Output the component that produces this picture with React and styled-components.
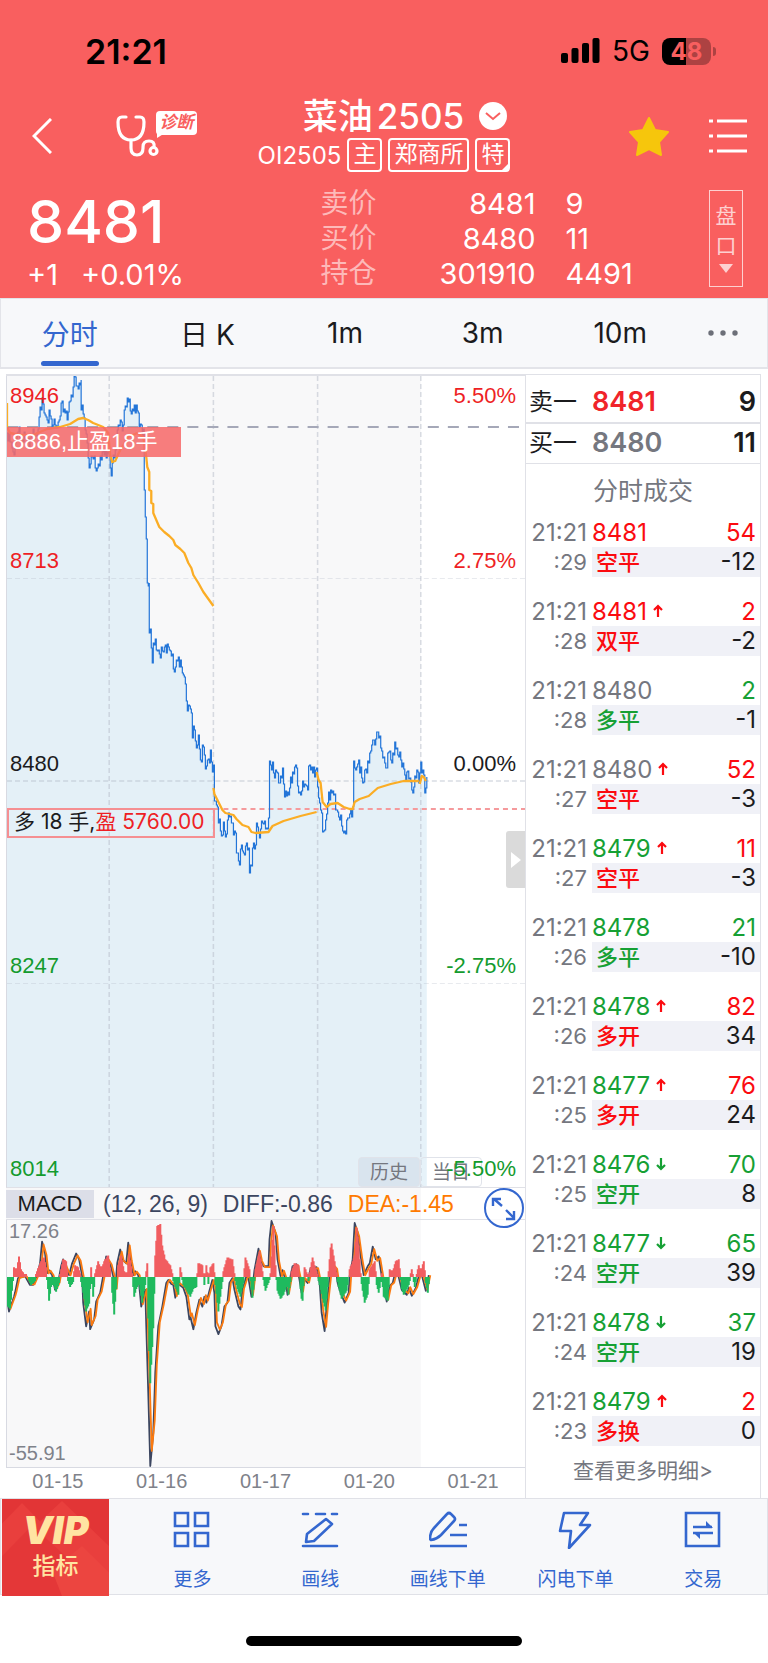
import React from "react";
import styled, { createGlobalStyle } from "styled-components";

const days = ["01-15", "01-16", "01-17", "01-20", "01-21"];

const levels = [
  { price: "8713", percent: "2.75%", color: "#ee1f25" },
  { price: "8480", percent: "0.00%", color: "#1b1b1d" },
  { price: "8247", percent: "-2.75%", color: "#149b2e" },
  { price: "8014", percent: "-5.50%", color: "#149b2e" },
];

const quotes = [
  { label: "卖价", price: "8481", count: "9" },
  { label: "买价", price: "8480", count: "11" },
  { label: "持仓", price: "301910", count: "4491" },
];

const red = "#fb0b10";
const green = "#16a034";
const gray = "#75777f";

const trades = [
  { sec: ":29", price: "8481", tone: red, type: "空平", side: red, vol: "54", diff: "-12" },
  { sec: ":28", price: "8481", tone: red, move: "up", type: "双平", side: red, vol: "2", diff: "-2" },
  { sec: ":28", price: "8480", tone: gray, type: "多平", side: green, vol: "2", diff: "-1" },
  { sec: ":27", price: "8480", tone: gray, move: "up", type: "空平", side: red, vol: "52", diff: "-3" },
  { sec: ":27", price: "8479", tone: green, move: "up", type: "空平", side: red, vol: "11", diff: "-3" },
  { sec: ":26", price: "8478", tone: green, type: "多平", side: green, vol: "21", diff: "-10" },
  { sec: ":26", price: "8478", tone: green, move: "up", type: "多开", side: red, vol: "82", diff: "34" },
  { sec: ":25", price: "8477", tone: green, move: "up", type: "多开", side: red, vol: "76", diff: "24" },
  { sec: ":25", price: "8476", tone: green, move: "down", type: "空开", side: green, vol: "70", diff: "8" },
  { sec: ":24", price: "8477", tone: green, move: "down", type: "空开", side: green, vol: "65", diff: "39" },
  { sec: ":24", price: "8478", tone: green, move: "down", type: "空开", side: green, vol: "37", diff: "19" },
  { sec: ":23", price: "8479", tone: green, move: "up", type: "多换", side: red, vol: "2", diff: "0" },
];

// chart series as flat x,y pairs in viewBox units
const priceData = [
  0,57, 6,76, 10,57, 20,64, 30,57, 32,41, 34,34, 35,22, 37,37, 40,44, 42,34, 45,51, 48,49, 52,44,
  54,27, 56,36, 61,36, 62,26, 66,20, 66,11, 68,1, 70,10, 74,4, 74,34, 76,38, 79,58, 82,84, 82,92,
  85,81, 90,92, 94,84, 96,74, 101,77, 104,100, 105,87, 108,74, 111,49, 116,49, 117,34, 120,22,
  124,38, 127,29, 131,37, 132,51, 137,54, 137,114, 138,141, 139,163, 140,207, 142,207, 142,257,
  143,253, 144,272, 145,287, 146,267, 150,275, 156,276, 160,268, 163,275, 167,296, 169,284,
  171,281, 175,297, 178,308, 179,325, 182,330, 185,340, 185,362, 187,354, 189,372, 191,359,
  193,384, 196,371, 198,393, 201,383, 203,374, 205,396, 206,389, 207,425, 210,431, 211,447,
  215,459, 216,446, 218,461, 220,444, 222,441, 228,457, 229,477, 232,489, 234,469, 236,477,
  239,467, 241,472, 242,497, 244,490, 245,472, 248,469, 249,447, 251,457, 255,447, 259,452,
  261,442, 262,385, 264,394, 265,386, 267,402, 269,396, 271,407, 275,392, 277,421, 281,419,
  283,401, 289,392, 291,417, 298,409, 301,406, 301,390, 305,397, 309,392, 310,411, 313,434,
  315,456, 317,454, 320,427, 321,416, 326,419, 330,436, 336,457, 341,442, 345,431, 346,385,
  348,394, 351,384, 352,397, 356,406, 357,394, 361,387, 364,369, 366,364, 370,356, 373,372,
  376,381, 378,392, 381,376, 384,387, 387,366, 390,379, 395,387, 397,399, 402,402, 404,414,
  410,396, 411,407, 413,386, 416,399, 417,417, 419,401,
];

const averageData = [
  [0,27, 0,51, 3,57, 13,59, 26,59, 40,53, 53,51, 63,48, 71,43, 76,42, 81,44, 86,47, 96,51, 101,57,
    103,79, 105,86, 108,85, 113,74, 121,61, 130,57, 136,61, 139,81, 140,91, 142,96, 142,114,
    144,115, 144,127, 146,128, 146,137, 149,144, 152,151, 157,156, 162,160, 166,164, 168,169,
    173,173, 177,177, 181,187, 184,192, 186,199, 191,207, 196,216, 201,223, 206,230],
  [206,412, 207,418, 210,424, 215,434, 218,437, 226,439, 229,443, 235,449, 241,451, 244,456,
    248,457, 261,456, 265,450, 276,445, 293,440, 309,436],
  [309,396, 311,404, 313,407, 315,426, 319,431, 323,428, 330,427, 336,431, 342,433, 345,433,
    347,426, 352,423, 361,420, 370,412, 383,408, 396,405, 411,405],
  [412,408, 414,400, 416,401, 418,405],
];

const diffData = [
  0,79, 2,93, 7,78, 8,74, 11,59, 18,57, 23,66, 26,66, 30,56, 33,44, 35,22, 38,34, 40,54, 42,51,
  45,56, 48,71, 51,64, 54,47, 56,40, 59,49, 62,56, 65,44, 69,34, 72,40, 75,57, 76,84, 79,108,
  82,93, 83,111, 87,101, 89,83, 93,74, 97,51, 99,37, 103,44, 106,57, 108,71, 110,44, 113,30,
  115,40, 119,44, 121,23, 123,40, 126,56, 128,52, 131,56, 134,88, 138,71, 139,108, 141,176,
  143,250, 146,216, 148,155, 151,108, 155,88, 159,64, 161,61, 164,65, 166,66, 168,79, 170,64,
  176,69, 179,78, 182,101, 183,98, 186,111, 189,94, 192,81, 195,88, 197,78, 199,84, 202,72,
  205,61, 207,74, 208,108, 211,116, 214,108, 217,88, 220,84, 222,64, 225,59, 227,71, 231,88,
  233,91, 235,71, 239,57, 241,59, 244,78, 247,51, 251,29, 253,40, 256,47, 261,47, 262,20,
  264,1, 268,13, 270,40, 273,57, 275,51, 278,61, 280,76, 283,57, 285,47, 289,45, 292,61,
  294,74, 296,59, 300,64, 303,49, 309,48, 312,64, 314,94, 317,113, 319,88, 322,57, 324,44,
  328,49, 330,64, 333,74, 337,84, 341,74, 342,57, 345,40, 347,3, 350,13, 353,37, 356,56,
  360,47, 362,44, 365,27, 368,40, 371,37, 374,57, 379,83, 382,67, 385,64, 388,51, 390,54,
  394,71, 399,76, 401,69, 404,77, 408,69, 411,57, 414,56, 418,72, 421,56,
];

const histData = [
  0,-28, 2,-30, 4,-12, 6,8, 9,6, 11,19, 13,6, 16,1, 20,0, 23,-6, 27,-2, 29,4, 33,14, 36,18,
  38,8, 40,-10, 41,-22, 43,-8, 45,-4, 48,-13, 51,-4, 53,6, 55,16, 58,14, 60,-2, 62,-8, 65,-3,
  67,10, 70,8, 72,2, 74,-8, 78,-33, 81,-25, 82,-10, 83,8, 85,-18, 87,2, 90,14, 93,6, 96,14,
  100,20, 103,0, 104,-14, 106,-36, 108,-10, 110,10, 113,20, 116,4, 119,2, 121,22, 124,2,
  126,-18, 128,-10, 131,-4, 134,-24, 137,-6, 138,4, 139,12, 140,-40, 142,-106, 145,-50, 147,20,
  149,50, 152,52, 154,30, 157,16, 162,10, 165,-2, 170,-16, 172,8, 175,-6, 182,-18, 185,-10,
  188,-8, 190,12, 194,10, 196,-6, 198,10, 200,-5, 202,8, 205,12, 207,-6, 210,-33, 213,-10,
  215,4, 219,18, 224,16, 226,2, 229,-10, 232,-18, 235,-4, 237,18, 241,6, 244,-19, 247,6,
  251,24, 254,4, 257,-12, 262,2, 264,36, 265,50, 267,10, 269,-12, 272,-20, 275,-16, 278,-8,
  279,-4, 280,-16, 283,4, 286,12, 290,10, 293,-20, 294,-22, 296,8, 300,-2, 304,18, 306,10,
  310,-2, 314,-20, 317,-32, 320,4, 322,28, 323,32, 327,8, 330,-8, 333,-20, 338,-12, 341,6,
  344,14, 346,20, 348,48, 350,30, 352,2, 354,-12, 356,-24, 359,-16, 361,6, 366,14, 368,-6,
  370,-14, 373,2, 375,-18, 379,-22, 381,6, 384,4, 387,14, 390,16, 393,-10, 395,-16, 400,-6,
  403,6, 406,-8, 410,10, 412,4, 415,14, 417,-4, 419,-14, 421,4,
];

const ZERO = 58;

const pairs = (flat) => {
  const out = [];
  for (let i = 0; i < flat.length; i += 2) out.push([flat[i], flat[i + 1]]);
  return out;
};

const linePath = (points) => "M" + points.map((p) => p.join(" ")).join("L");

// minute ticks between the known turning points, drawn as small steps
const tickPath = (points) => {
  let d = `M${points[0][0]} ${points[0][1]}`;
  let n = 0;
  for (let i = 1; i < points.length; i++) {
    const [x0, y0] = points[i - 1];
    const [x1, y1] = points[i];
    for (let x = x0 + 1; x < x1; x++) {
      n++;
      const y = y0 + ((y1 - y0) * (x - x0)) / (x1 - x0);
      const swing = Math.round(Math.sin(n * 2.4) * 4 + Math.cos(n * 5.3) * 4);
      d += `H${x}V${Math.round(y + swing)}`;
    }
    d += `H${x1}V${y1}`;
  }
  return d;
};

// histogram bars, slightly wider than their step so neighbours join up
const barPath = (points, sign) => {
  let d = "";
  for (let i = 1; i < points.length; i++) {
    const [x0, v0] = points[i - 1];
    const [x1, v1] = points[i];
    for (let x = x0; x < x1; x++) {
      const v = Math.round(v0 + ((v1 - v0) * (x - x0)) / (x1 - x0));
      if (v * sign > 0) d += `M${x} ${ZERO}V${ZERO - v - sign * 2}H${x + 2}V${ZERO}Z`;
    }
  }
  return d;
};

const pricePath = tickPath(pairs(priceData));
const diffPoints = pairs(diffData);
const deaPoints = diffPoints.map(([x, y]) => [x + 1.5, ZERO + (y - ZERO) * 0.92]);
const histPoints = pairs(histData);

const Arrow = ({ move }) => (
  <ArrowIcon viewBox="0 0 10 14" aria-hidden="true" $move={move}>
    <path
      d={move === "down" ? "M5 1V12M1 8l4 4 4-4" : "M5 13V2M1 6l4-4 4 4"}
      fill="none"
      stroke="currentColor"
      strokeWidth="2.2"
    />
  </ArrowIcon>
);

const PriceChart = () => (
  <PriceSvg viewBox="0 0 517 811" preserveAspectRatio="none">
    <rect width="413" height="811" fill="#f8f8f9" />
    <path d={`${pricePath}V811H0Z`} fill="#d9ebf6" fillOpacity="0.65" />
    <g stroke="#b4bac8" strokeOpacity="0.5" strokeWidth="1.5" strokeDasharray="5 3">
      <path d="M102 0V811M206 0V811M310 0V811M413 0V811" />
      <path d="M0 405H517" />
      <path d="M0 202.5H517M0 607.5H517" strokeOpacity="0.3" strokeWidth="1" />
    </g>
    <path d="M0 51H517" stroke="#a5a8b8" strokeWidth="2" strokeDasharray="11 9" />
    <path d="M0 433H517" stroke="#f59a9c" strokeWidth="1.8" strokeDasharray="5 4" />
    <path d={pricePath} fill="none" stroke="#2375d8" strokeWidth="1.2" />
    {averageData.map((part) => (
      <path
        key={part[0]}
        d={linePath(pairs(part))}
        fill="none"
        stroke="#fbad25"
        strokeWidth="2.3"
        strokeLinejoin="round"
      />
    ))}
  </PriceSvg>
);

const MacdChart = () => (
  <MacdSvg viewBox="0 0 517 251" preserveAspectRatio="none">
    <rect width="413" height="251" fill="#f8f8f9" />
    <g fill="none" strokeWidth="1.8" strokeLinejoin="round">
      <path d={linePath(diffPoints)} stroke="#3c4660" />
      <path d={linePath(deaPoints)} stroke="#fb7a10" />
    </g>
    <path d={barPath(histPoints, 1)} fill="#f15d60" />
    <path d={barPath(histPoints, -1)} fill="#1fba5e" />
  </MacdSvg>
);

const MoreIcon = () => (
  <NavIcon viewBox="0 0 38 38">
    <path d="M2 2h13v13H2zM22 2h13v13H22zM2 22h13v13H2zM22 22h13v13H22z" />
  </NavIcon>
);

const DrawIcon = () => (
  <NavIcon viewBox="0 0 38 38">
    <path d="M2 3h5M15 3h9M31 3h5M2 35h34" strokeLinecap="round" />
    <path d="M5 31l1-8L25 8l6 5L13 30z" strokeLinejoin="round" />
  </NavIcon>
);

const DrawOrderIcon = () => (
  <NavIcon viewBox="0 0 38 38">
    <path d="M1 28q0-7 4-11L18 3q2-2 4 0l3 3q2 2 0 4L12 24q-4 4-10 5z" strokeLinejoin="round" />
    <path d="M30 14h8M21 24h17M1 35h37" />
  </NavIcon>
);

const FlashIcon = () => (
  <NavIcon viewBox="0 0 38 38">
    <path d="M8 2H32L24 14h10L13 37l2-17H4z" strokeLinejoin="round" />
  </NavIcon>
);

const TradeIcon = () => (
  <NavIcon viewBox="0 0 38 38">
    <path d="M2 2h33v33H2zM9 16h19M9 22h20" />
    <path d="M22 10l7 7h-7zM9 21h7v7z" fill="currentColor" stroke="none" />
  </NavIcon>
);

const navItems = [
  { label: "更多", icon: MoreIcon },
  { label: "画线", icon: DrawIcon },
  { label: "画线下单", icon: DrawOrderIcon },
  { label: "闪电下单", icon: FlashIcon },
  { label: "交易", icon: TradeIcon },
];

const App = () => {
  return (
    <Page>
      <GlobalStyle />
      <Header>
        <StatusBar>
          <Clock>21:21</Clock>
          <StatusRight>
            <svg width="39" height="26" viewBox="0 0 39 26">
              <rect y="15" width="7" height="10" rx="2" />
              <rect x="10.5" y="10" width="7" height="15" rx="2" />
              <rect x="21" y="5" width="7" height="20" rx="2" />
              <rect x="31.5" width="7" height="25" rx="2" />
            </svg>
            <Network>5G</Network>
            <Battery>
              <b>4</b>
              <b>8</b>
            </Battery>
          </StatusRight>
        </StatusBar>
        <TitleBar>
          <Tools>
            <IconButton aria-label="返回">
              <svg width="20" height="36" viewBox="0 0 20 36">
                <path d="M19 1L2 18l17 17" fill="none" stroke="#fff" strokeWidth="3" />
              </svg>
            </IconButton>
            <DiagnoseButton>
              <svg width="43" height="42" viewBox="0 0 43 42">
                <g fill="none" stroke="#fff" strokeWidth="3.2" strokeLinecap="round">
                  <path d="M10 2H6Q2 2 2 7q0 18 13 18T28 7q0-5-4-5h-4" />
                  <path d="M15 25v8q0 7 6 7t6-7v-1q0-6 6-6t5 6" />
                  <circle cx="37.5" cy="36" r="3.5" />
                </g>
              </svg>
              <Bubble>诊断</Bubble>
            </DiagnoseButton>
          </Tools>
          <TitleBlock>
            <Title>
              <TitleName>
                <span>菜油</span>
                <span>2505</span>
              </TitleName>
              <IconButton aria-label="切换合约">
                <svg width="28" height="28" viewBox="0 0 28 28">
                  <circle cx="14" cy="14" r="14" fill="#fff" />
                  <path d="M7 11l7 6 7-6" fill="none" stroke="#f95f5f" strokeWidth="2" />
                </svg>
              </IconButton>
            </Title>
            <Subtitle>
              <span>OI2505</span>
              <Tag>主</Tag>
              <Tag>郑商所</Tag>
              <Tag $corner>特</Tag>
            </Subtitle>
          </TitleBlock>
          <Tools $end>
            <IconButton aria-label="自选">
              <svg width="42" height="40" viewBox="0 0 42 40">
                <path
                  d="M21 2l6 12 13 2-9 10 2 13-12-6-12 6 2-13L2 16l13-2z"
                  fill="#f6c60c"
                  stroke="#f6c60c"
                  strokeWidth="2"
                  strokeLinejoin="round"
                />
              </svg>
            </IconButton>
            <IconButton aria-label="菜单">
              <svg width="38" height="34" viewBox="0 0 38 34">
                <path
                  d="M0 2h4M8 2h30M0 17h4M8 17h30M0 32h4M8 32h30"
                  stroke="#fff"
                  strokeWidth="3"
                />
              </svg>
            </IconButton>
          </Tools>
        </TitleBar>
        <Quote>
          <Last>
            <LastPrice>8481</LastPrice>
            <Change>
              <span>+1</span>
              <span>+0.01%</span>
            </Change>
          </Last>
          <QuoteTable>
            <tbody>
              {quotes.map((q) => (
                <tr key={q.label}>
                  <th scope="row">{q.label}</th>
                  <td>{q.price}</td>
                  <td>{q.count}</td>
                </tr>
              ))}
            </tbody>
          </QuoteTable>
          <DepthButton>
            <span>盘</span>
            <span>口</span>
            <svg width="14" height="9" viewBox="0 0 14 9">
              <path d="M0 0h14L7 9z" fill="#fdd0d0" />
            </svg>
          </DepthButton>
        </Quote>
      </Header>

      <Tabs>
        <Tab $active>分时</Tab>
        <Tab>日 K</Tab>
        <Tab>1m</Tab>
        <Tab>3m</Tab>
        <Tab>10m</Tab>
        <MoreTab aria-label="更多周期">
          <svg width="30" height="6" viewBox="0 0 30 6" fill="#6c6f78">
            <circle cx="3" cy="3" r="2.7" />
            <circle cx="15" cy="3" r="2.7" />
            <circle cx="27" cy="3" r="2.7" />
          </svg>
        </MoreTab>
      </Tabs>

      <Main>
        <Charts>
          <PricePanel>
            <PriceChart />
            <RangeSwitch>
              <RangeButton $active>历史</RangeButton>
              <RangeButton>当日</RangeButton>
            </RangeSwitch>
            <Scale>
              {levels.map((level, i) => (
                <ScaleRow key={level.price}>
                  {i === 0 && (
                    <Level $color="#ee1f25">
                      <span>8946</span>
                      <span>5.50%</span>
                    </Level>
                  )}
                  <Level $color={level.color} $bottom>
                    <span>{level.price}</span>
                    <span>{level.percent}</span>
                  </Level>
                </ScaleRow>
              ))}
            </Scale>
            <StopTag>8886,止盈18手</StopTag>
            <PositionTag>
              多 18 手,<em>盈 5760.00</em>
            </PositionTag>
            <Handle aria-label="收起明细">
              <svg width="10" height="16" viewBox="0 0 10 16">
                <path d="M0 0l10 8-10 8z" fill="#fff" />
              </svg>
            </Handle>
          </PricePanel>
          <MacdHead>
            <MacdButton>MACD</MacdButton>
            <MacdText>(12, 26, 9)</MacdText>
            <MacdText>DIFF:-0.86</MacdText>
            <MacdText $color="#ff7a00">DEA:-1.45</MacdText>
            <Expand aria-label="全屏">
              <svg width="40" height="40" viewBox="0 0 40 40">
                <circle cx="20" cy="20" r="19" fill="#fff" fillOpacity="0.8" />
                <g fill="none" stroke="#3467cf" strokeWidth="2">
                  <circle cx="20" cy="20" r="19" />
                  <path d="M18 18l-8-7M9 18v-7h8M22 22l8 8M22 31h8v-8" strokeWidth="2.4" />
                </g>
              </svg>
            </Expand>
          </MacdHead>
          <MacdPanel>
            <MacdChart />
            <MacdRange>
              <span>17.26</span>
              <span>-55.91</span>
            </MacdRange>
          </MacdPanel>
          <Dates>
            {days.map((day) => (
              <span key={day}>{day}</span>
            ))}
          </Dates>
        </Charts>

        <Side>
          <BestTable>
            <tbody>
              <tr>
                <th scope="row">卖一</th>
                <BestPrice $color="#f0242a">8481</BestPrice>
                <td>9</td>
              </tr>
              <tr>
                <th scope="row">买一</th>
                <BestPrice $color={gray}>8480</BestPrice>
                <td>11</td>
              </tr>
            </tbody>
          </BestTable>
          <SideTitle>分时成交</SideTitle>
          <TradeTable>
            <tbody>
              {trades.map((t, i) => (
                <tr key={i}>
                  <TimeCell>
                    <Line>21:21</Line>
                    <Line $size="22px">{t.sec}</Line>
                  </TimeCell>
                  <td>
                    <Line $color={t.tone}>
                      {t.price}
                      {t.move && <Arrow move={t.move} />}
                    </Line>
                    <TypeLine $color={t.side} $size="22px" $filled>
                      {t.type}
                    </TypeLine>
                  </td>
                  <VolumeCell>
                    <Line $color={t.side}>{t.vol}</Line>
                    <Line $filled>{t.diff}</Line>
                  </VolumeCell>
                </tr>
              ))}
            </tbody>
          </TradeTable>
          <MoreLink href="#trades">查看更多明细&gt;</MoreLink>
        </Side>
      </Main>

      <BottomNav>
        <VipButton>
          <VipArt viewBox="0 0 107 95" preserveAspectRatio="none">
            <path d="M0 24L20 4l18 18L60 2l47 44v49H0z" fill="#e93f3d" />
            <path d="M0 56L30 26l77 69H0z" fill="#e43738" />
            <path d="M50 70L80 46l27 26v23H60z" fill="#ec4540" />
          </VipArt>
          <VipName>VIP</VipName>
          <VipLabel>指标</VipLabel>
        </VipButton>
        {navItems.map(({ label, icon: ItemIcon }) => (
          <NavButton key={label}>
            <ItemIcon />
            {label}
          </NavButton>
        ))}
      </BottomNav>
      <HomeArea>
        <HomeBar />
      </HomeArea>
    </Page>
  );
};

export default App;

const GlobalStyle = createGlobalStyle`
  * {
    box-sizing: border-box;
  }
  body {
    margin: 0;
    background: #fff;
    font-family: Inter, "Noto Sans CJK SC", sans-serif;
    color: #1b1b1d;
  }
  button {
    margin: 0;
    padding: 0;
    border: 0;
    background: transparent;
    font: inherit;
    color: inherit;
    cursor: pointer;
  }
  svg {
    display: block;
  }
  table {
    border-collapse: collapse;
  }
  th,
  td {
    padding: 0;
    font-weight: 400;
    text-align: left;
  }
`;

const Page = styled.div`
  display: flex;
  flex-direction: column;
`;
const Header = styled.header`
  height: 298px;
  background: #f95f5f;
  color: #fff;
`;
const StatusBar = styled.div`
  display: flex;
  justify-content: space-between;
  align-items: center;
  height: 98px;
  padding: 4px 57px 0 85px;
  color: #000;
`;
const Clock = styled.div`
  font-size: 34px;
  font-weight: 600;
`;
const StatusRight = styled.div`
  display: flex;
  align-items: center;
`;
const Network = styled.span`
  margin: 0 12px;
  font-size: 28px;
`;
const Battery = styled.div`
  position: relative;
  display: flex;
  align-items: center;
  justify-content: center;
  width: 49px;
  height: 27px;
  border-radius: 8px;
  background: linear-gradient(90deg, #000 49%, #ad4242 49%);
  color: #f95f5f;
  font-size: 24px;
  line-height: 27px;

  &::after {
    content: "";
    position: absolute;
    right: -5px;
    top: 9px;
    width: 3px;
    height: 9px;
    border-radius: 0 4px 4px 0;
    background: #ad4242;
  }
`;
const TitleBar = styled.div`
  display: grid;
  grid-template-columns: 1fr auto 1fr;
  height: 84px;
`;
const Tools = styled.div`
  display: flex;
  align-items: center;
  justify-content: ${({ $end }) => ($end ? "flex-end" : "flex-start")};
  gap: ${({ $end }) => ($end ? "39px" : "64px")};
  padding: 0 21px 8px 32px;
`;
const IconButton = styled.button`
  flex: none;
`;
const DiagnoseButton = styled.button`
  position: relative;
`;
const Bubble = styled.span`
  position: absolute;
  left: 40px;
  top: -4px;
  width: 41px;
  height: 24px;
  border-radius: 4px;
  background: #fff;
  color: #f95f5f;
  font-size: 17px;
  font-weight: 700;
  font-style: italic;
  line-height: 23px;

  &::after {
    content: "";
    position: absolute;
    left: 1px;
    bottom: -3px;
    border-top: 5px solid #fff;
    border-right: 8px solid transparent;
  }
`;
const TitleBlock = styled.div`
  display: flex;
  flex-direction: column;
  align-items: center;
`;
const Title = styled.h1`
  display: flex;
  align-items: center;
  gap: 15px;
  margin: 0 0 0 42px;
  font-size: 35px;
  font-weight: 500;
  line-height: 36px;
`;
const TitleName = styled.span`
  display: flex;
  gap: 4px;
`;
const Subtitle = styled.div`
  display: flex;
  align-items: center;
  gap: 6px;
  margin-top: 4px;
  font-size: 24px;
`;
const Tag = styled.span`
  position: relative;
  height: 34px;
  padding: 0 4px;
  border: 2px solid #fff;
  border-radius: 4px;
  font-size: 23px;
  line-height: 29px;

  &::after {
    content: "";
    display: ${({ $corner }) => ($corner ? "block" : "none")};
    position: absolute;
    right: 0;
    bottom: 0;
    border-left: 6px solid transparent;
    border-bottom: 6px solid #fff;
  }
`;
const Quote = styled.div`
  display: flex;
  align-items: flex-start;
  padding: 4px 25px 0 27px;
`;
const Last = styled.div`
  flex: 0 0 41%;
`;
const LastPrice = styled.div`
  font-size: 59px;
  font-weight: 500;
  line-height: 71px;
`;
const Change = styled.div`
  display: flex;
  gap: 23px;
  font-size: 29px;
  line-height: 35px;
`;
const QuoteTable = styled.table`
  font-size: 29px;
  line-height: 35px;

  tr {
    height: 35px;
  }
  th {
    width: 64px;
    color: #fdb9b9;
    font-size: 28px;
  }
  td:nth-child(2) {
    width: 151px;
    text-align: right;
  }
  td:last-child {
    padding-left: 30px;
  }
`;
const DepthButton = styled.button`
  display: flex;
  flex-direction: column;
  align-items: center;
  width: 34px;
  height: 97px;
  margin: 4px 0 0 auto;
  padding-top: 10px;
  border: 1px solid #fdd0d0;
  color: #fdd0d0;
  font-size: 21px;
  line-height: 30px;

  svg {
    margin-top: 3px;
  }
`;
const Tabs = styled.nav`
  display: grid;
  grid-template-columns: repeat(5, 1fr) 78px;
  height: 71px;
  border: 1px solid #e3e4e9;
  border-bottom-width: 2px;
  background: #f7f8fa;
`;
const Tab = styled.button`
  position: relative;
  display: flex;
  align-items: center;
  justify-content: center;
  font-size: 28px;
  color: ${({ $active }) => ($active ? "#3467cf" : "#1b1b1d")};

  &::after {
    content: "";
    display: ${({ $active }) => ($active ? "block" : "none")};
    position: absolute;
    bottom: 1px;
    width: 58px;
    height: 5px;
    border-radius: 3px;
    background: #3467cf;
  }
`;
const MoreTab = styled(Tab)`
  padding-right: 10px;
`;
const Main = styled.main`
  display: flex;
  padding: 5px 7px 0 6px;
`;
const Charts = styled.section`
  display: flex;
  flex-direction: column;
  flex: 1;
  min-width: 0;
  border-top: 2px solid #e0e1e7;
  font-family: "Liberation Sans", "Noto Sans CJK SC", sans-serif;
`;
const PricePanel = styled.div`
  position: relative;
  border-left: 1px solid #d8dae2;
  border-bottom: 1px solid #e0e1e7;
`;
const PriceSvg = styled.svg`
  width: 100%;
  height: 811px;
`;
const StopTag = styled.div`
  position: absolute;
  left: 0;
  top: 51px;
  width: 174px;
  height: 30px;
  padding-left: 5px;
  background: rgba(247, 105, 105, 0.86);
  color: #fff;
  font-size: 22px;
  line-height: 30px;
`;
const PositionTag = styled.div`
  position: absolute;
  left: 0;
  top: 432px;
  width: 208px;
  height: 30px;
  padding-left: 5px;
  border: 2px solid #f58f92;
  font-family: Inter, "Noto Sans CJK SC", sans-serif;
  font-size: 21px;
  line-height: 24px;
  white-space: nowrap;

  em {
    color: #ee1f25;
    font-style: normal;
  }
`;
const RangeSwitch = styled.div`
  position: absolute;
  right: 43px;
  bottom: 0;
  display: flex;
`;
const RangeButton = styled.button`
  width: 62px;
  height: 30px;
  border: 1px solid #e0e3ea;
  border-radius: 4px;
  background: ${({ $active }) => ($active ? "#d9e4ee" : "transparent")};
  color: ${gray};
  font-size: 19px;
  line-height: 30px;
`;
const Scale = styled.div`
  position: absolute;
  inset: 0;
  display: grid;
  grid-template-rows: repeat(4, 1fr);
  padding: 0 9px 0 3px;
  pointer-events: none;
`;
const ScaleRow = styled.div`
  display: flex;
  flex-direction: column;
  padding: 5px 0 3px;
`;
const Level = styled.div`
  display: flex;
  justify-content: space-between;
  margin-top: ${({ $bottom }) => ($bottom ? "auto" : "0")};
  color: ${({ $color }) => $color};
  font-size: 22px;
  line-height: 30px;
`;
const Handle = styled.button`
  position: absolute;
  right: 0;
  top: 455px;
  display: flex;
  align-items: center;
  justify-content: center;
  width: 19px;
  height: 57px;
  border-radius: 3px 0 0 3px;
  background: #dadada;
`;
const MacdHead = styled.div`
  position: relative;
  display: flex;
  align-items: center;
  gap: 15px;
  height: 32px;
  border-bottom: 1px solid #e0e1e7;
  background: linear-gradient(90deg, #f8f8f9 80%, #fff 80%);
`;
const MacdButton = styled.button`
  width: 88px;
  height: 28px;
  margin-right: -6px;
  background: #dcdee8;
  font-size: 22px;
`;
const MacdText = styled.span`
  color: ${({ $color }) => $color || "#3c4660"};
  font-size: 23px;
  line-height: 28px;
  white-space: nowrap;
`;
const Expand = styled.button`
  position: absolute;
  right: 1px;
  top: 0;
  z-index: 1;
`;
const MacdPanel = styled.div`
  position: relative;
  border-left: 1px solid #d8dae2;
  border-bottom: 1px solid #d8dae2;
`;
const MacdSvg = styled.svg`
  width: 100%;
  height: 247px;
`;
const MacdRange = styled.div`
  position: absolute;
  inset: 0;
  display: flex;
  flex-direction: column;
  justify-content: space-between;
  padding: 0 2px 2px;
  color: #7f828a;
  font-size: 20px;
`;
const Dates = styled.div`
  display: grid;
  grid-template-columns: repeat(5, 1fr);
  height: 30px;
  color: #7f828a;
  font-size: 20px;
  line-height: 26px;
  text-align: center;
`;
const Side = styled.aside`
  display: flex;
  flex-direction: column;
  flex: 0 0 236px;
  border: 1px solid #e0e1e7;
  border-bottom: 0;
`;
const BestTable = styled.table`
  width: 100%;

  tr {
    height: 40px;
    border-bottom: 1px solid #e0e1e7;
  }
  tr:first-child {
    height: 48px;
    border-bottom-width: 2px;
  }
  tr:first-child > * {
    padding-top: 6px;
  }
  th {
    width: 66px;
    padding-left: 3px;
    font-size: 24px;
    line-height: 30px;
  }
  td:last-child {
    padding-right: 4px;
    font-size: 27px;
    font-weight: 600;
    line-height: 30px;
    text-align: right;
  }
`;
const BestPrice = styled.td`
  color: ${({ $color }) => $color};
  font-size: 27px;
  font-weight: 600;
  line-height: 30px;
`;
const SideTitle = styled.h2`
  margin: 0;
  padding: 10px 0;
  color: ${gray};
  font-size: 25px;
  font-weight: 400;
  line-height: 34px;
  text-align: center;
`;
const TradeTable = styled.table`
  width: 100%;

  td {
    padding-bottom: 20px;
  }
  tr:last-child td {
    padding-bottom: 0;
  }
`;
const Line = styled.div`
  display: flex;
  align-items: center;
  gap: 6px;
  height: ${({ $filled }) => ($filled ? "30px" : "29px")};
  padding-left: ${({ $filled }) => ($filled ? "4px" : "0")};
  background: ${({ $filled }) => ($filled ? "#f0f1f7" : "transparent")};
  color: ${({ $color }) => $color || "inherit"};
  font-size: ${({ $size }) => $size || "24px"};
`;
const TypeLine = styled(Line)`
  padding-bottom: 4px;
  font-family: "Noto Sans CJK SC", sans-serif;
  font-weight: 500;
  line-height: 26px;
`;
const TimeCell = styled.td`
  width: 66px;
  color: ${gray};

  ${Line} {
    justify-content: flex-end;
    padding-right: 5px;
  }
`;
const VolumeCell = styled.td`
  ${Line} {
    justify-content: flex-end;
    padding-right: 4px;
  }
`;
const ArrowIcon = styled.svg`
  width: 10px;
  height: 14px;
  color: ${({ $move }) => ($move === "up" ? red : green)};
`;
const MoreLink = styled.a`
  display: flex;
  flex: 1;
  align-items: center;
  justify-content: center;
  padding-bottom: 6px;
  color: ${gray};
  font-size: 21px;
  text-decoration: none;
`;
const BottomNav = styled.nav`
  display: grid;
  grid-template-columns: repeat(6, 1fr);
  height: 97px;
  border: 1px solid #e0e1e7;
  background: #f7f8fa;
`;
const NavButton = styled.button`
  display: flex;
  flex-direction: column;
  align-items: center;
  gap: 15px;
  padding-top: 12px;
  color: #3467cf;
  font-size: 19px;
  line-height: 32px;
`;
const NavIcon = styled.svg`
  width: 38px;
  height: 38px;
  fill: none;
  stroke: #3467cf;
  stroke-width: 2.6;
  color: #3467cf;
`;
const VipButton = styled.button`
  position: relative;
  display: flex;
  flex-direction: column;
  align-items: center;
  width: 107px;
  margin-left: 1px;
  padding-top: 12px;
  background: #e23536;
  color: #ffe4a2;
`;
const VipArt = styled.svg`
  position: absolute;
  inset: 0;
  width: 100%;
  height: 100%;
`;
const VipName = styled.span`
  position: relative;
  font-size: 38px;
  font-style: italic;
  font-weight: 900;
  line-height: 38px;
`;
const VipLabel = styled.span`
  position: relative;
  font-size: 23px;
  font-weight: 500;
  line-height: 34px;
`;
const HomeArea = styled.footer`
  display: flex;
  justify-content: center;
  padding: 41px 0 17px;
`;
const HomeBar = styled.div`
  width: 36%;
  height: 10px;
  border-radius: 5px;
  background: #000;
`;
